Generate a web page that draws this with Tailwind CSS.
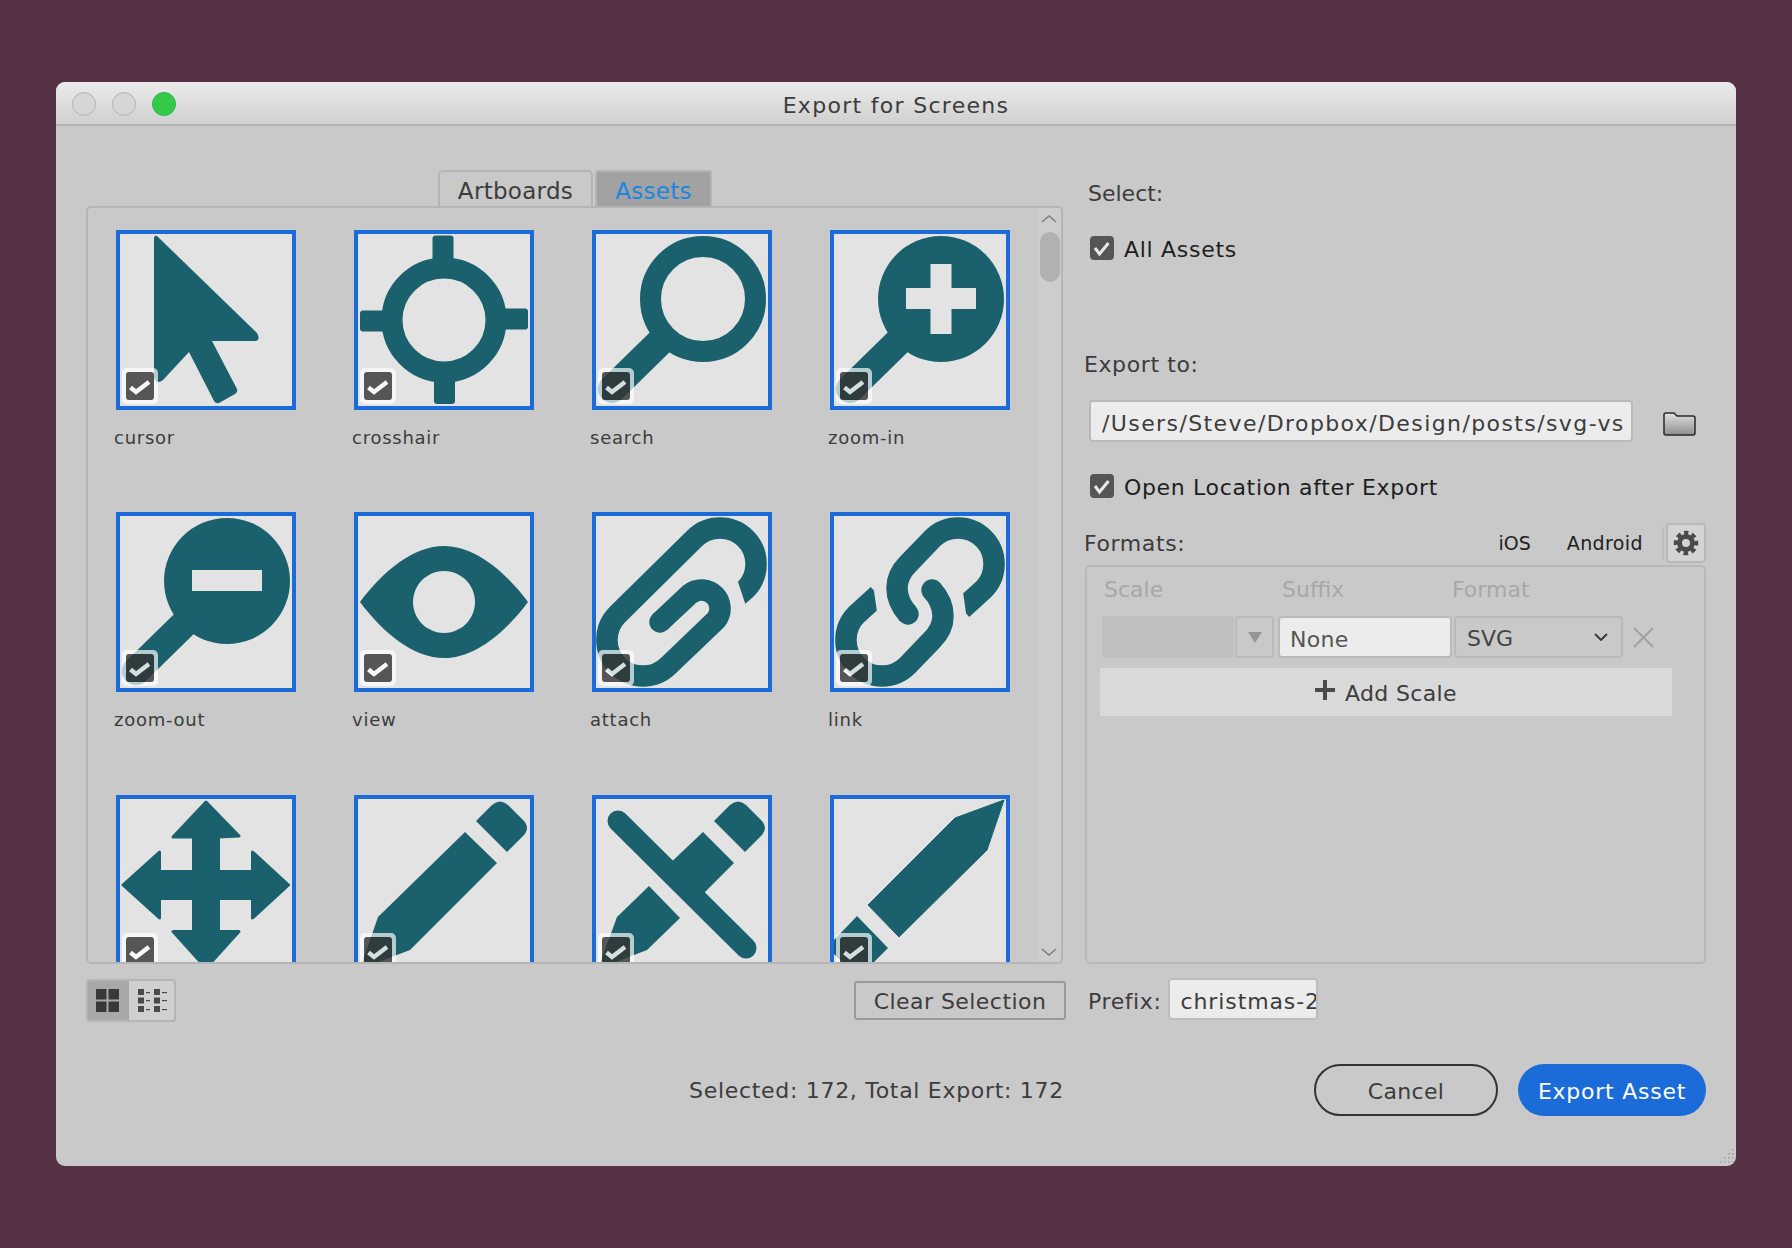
<!DOCTYPE html>
<html lang="en">
<head>
  <meta charset="UTF-8">
  <title>Export for Screens</title>
  <script src="https://cdn.jsdelivr.net/npm/@tailwindcss/browser@4"></script>
</head>
<body class="bg-[#573145] font-['DejaVu_Sans',sans-serif] text-[#3c3c3c]">
  <svg class="absolute size-0">
    <symbol id="badge" viewBox="0 0 36 36">
      <rect width="36" height="36" rx="5" fill="#fff" fill-opacity=".85"/>
      <rect x="4" y="4" width="28" height="28" rx="3" fill="#333"/>
      <path d="M8.500 19.500l5.500 4.500 13-10" fill="none" stroke="#fff" stroke-width="4.500"/>
    </symbol>
    <symbol id="tick" viewBox="0 0 24 24">
      <rect width="24" height="24" rx="4" fill="#555"/>
      <path d="M5 12l4.500 6 9-11" fill="none" stroke="#e8e8e8" stroke-width="3"/>
    </symbol>
    <linearGradient id="folder" x1="0" y1="0" x2="0" y2="1">
      <stop offset="0" stop-color="#e0e0e0"/>
      <stop offset="1" stop-color="#8e8e8e"/>
    </linearGradient>
  </svg>

  <div class="flex h-[1248px] w-[1792px] items-start pl-[56px] pt-[82px]">
    <div class="relative h-[1084px] w-[1680px] overflow-hidden rounded-[9px] bg-[#c9c9c9]">

      <!-- title bar -->
      <div class="relative flex h-[44px] items-center justify-center border-b-2 border-[#b2b2b2] bg-gradient-to-b from-[#ebebeb] to-[#d0d0d0] pt-[4px] text-[22px] tracking-[1.3px]">
        <div class="absolute left-[16px] top-[10px] flex gap-[16px]">
          <span class="size-[24px] rounded-full border border-[#b4b4b4] bg-[#d6d6d6]"></span>
          <span class="size-[24px] rounded-full border border-[#b4b4b4] bg-[#d6d6d6]"></span>
          <span class="size-[24px] rounded-full border border-[#2cb544] bg-[#33c94b]"></span>
        </div>
        Export for Screens
      </div>

      <div class="flex pl-[30px] pt-[44px]">
        <!-- left column -->
        <div class="w-[980px]">
          <div class="ml-[352px] flex h-[36px] gap-[2px] pt-0 text-[23px] tracking-[.3px]">
            <div class="flex w-[155px] items-center justify-center rounded-t-[5px] border-2 border-b-0 border-[#b5b5b5] pt-[4px]">Artboards</div>
            <div class="flex w-[117px] items-center justify-center rounded-t-[3px] border-2 border-b-0 border-[#b5b5b5] bg-[#a2a2a2] pt-[4px] text-[#1c86e2]">Assets</div>
          </div>

          <div class="flex h-[758px] w-[977px] overflow-hidden rounded-[5px] border-2 border-[#b5b5b5]">
            <div class="h-[756px] flex-1 overflow-hidden pl-[28px] pt-[22px]">
              <div class="grid w-[900px] grid-cols-[repeat(4,180px)] gap-x-[58px] text-[18px] tracking-[.75px]">

                <div class="h-[282px]">
                  <div class="relative size-[180px] border-4 border-[#1b6cd9] bg-[#e3e3e3]">
                    <svg class="size-[172px]" viewBox="4 4 172 172" fill="#1a616d"><path d="M38 9Q38 5 41 6L141 103Q145 110 139 111L96 111 121 159Q122 162 119 164L103 173Q100 174 98 171L73 122 47 150Q41 155 38 148Z"/></svg>
                    <svg class="absolute left-[2px] top-[134px] size-[36px] opacity-80"><use href="#badge"/></svg>
                  </div>
                  <div class="-ml-[2px] mt-[14px] leading-[28px]">cursor</div>
                </div>

                <div>
                  <div class="relative size-[180px] border-4 border-[#1b6cd9] bg-[#e3e3e3]">
                    <svg class="size-[172px]" viewBox="4 4 172 172" fill="#1a616d">
                      <circle cx="90" cy="90" r="52" fill="none" stroke="#1a616d" stroke-width="21"/>
                      <rect x="78.500" y="5.500" width="21" height="32" rx="3"/>
                      <rect x="80" y="142" width="21" height="32" rx="3"/>
                      <rect x="6" y="80.500" width="32" height="21" rx="3"/>
                      <rect x="142" y="78.500" width="32" height="21" rx="3"/>
                    </svg>
                    <svg class="absolute left-[2px] top-[134px] size-[36px] opacity-80"><use href="#badge"/></svg>
                  </div>
                  <div class="-ml-[2px] mt-[14px] leading-[28px]">crosshair</div>
                </div>

                <div>
                  <div class="relative size-[180px] border-4 border-[#1b6cd9] bg-[#e3e3e3]">
                    <svg class="size-[172px]" viewBox="4 4 172 172">
                      <circle cx="111" cy="69" r="52.500" fill="none" stroke="#1a616d" stroke-width="21"/>
                      <path d="M67 113L20 159" stroke="#1a616d" stroke-width="28" stroke-linecap="round"/>
                    </svg>
                    <svg class="absolute left-[2px] top-[134px] size-[36px] opacity-80"><use href="#badge"/></svg>
                  </div>
                  <div class="-ml-[2px] mt-[14px] leading-[28px]">search</div>
                </div>

                <div>
                  <div class="relative size-[180px] border-4 border-[#1b6cd9] bg-[#e3e3e3]">
                    <svg class="size-[172px]" viewBox="4 4 172 172">
                      <circle cx="111" cy="69" r="63" fill="#1a616d"/>
                      <path d="M67 113L20 159" stroke="#1a616d" stroke-width="28" stroke-linecap="round"/>
                      <path d="M76 58h24.500v-24h21v24h24.500v21h-24.500v25h-21v-25h-24.500z" fill="#e3e3e3"/>
                    </svg>
                    <svg class="absolute left-[2px] top-[134px] size-[36px] opacity-80"><use href="#badge"/></svg>
                  </div>
                  <div class="-ml-[2px] mt-[14px] leading-[28px]">zoom-in</div>
                </div>

                <div class="h-[283px]">
                  <div class="relative size-[180px] border-4 border-[#1b6cd9] bg-[#e3e3e3]">
                    <svg class="size-[172px]" viewBox="4 4 172 172">
                      <circle cx="111" cy="69" r="63" fill="#1a616d"/>
                      <path d="M67 113L20 159" stroke="#1a616d" stroke-width="28" stroke-linecap="round"/>
                      <rect x="76" y="58" width="70" height="21" fill="#e3e3e3"/>
                    </svg>
                    <svg class="absolute left-[2px] top-[134px] size-[36px] opacity-80"><use href="#badge"/></svg>
                  </div>
                  <div class="-ml-[2px] mt-[14px] leading-[28px]">zoom-out</div>
                </div>

                <div>
                  <div class="relative size-[180px] border-4 border-[#1b6cd9] bg-[#e3e3e3]">
                    <svg class="size-[172px]" viewBox="4 4 172 172"><path fill="#1a616d" fill-rule="evenodd" d="M6 90C30 58 60 34 90 34S150 58 174 90C150 122 120 146 90 146S30 122 6 90ZM90 59a31 31 0 1 0 .01 0Z"/></svg>
                    <svg class="absolute left-[2px] top-[134px] size-[36px] opacity-80"><use href="#badge"/></svg>
                  </div>
                  <div class="-ml-[2px] mt-[14px] leading-[28px]">view</div>
                </div>

                <div>
                  <div class="relative size-[180px] border-4 border-[#1b6cd9] bg-[#e3e3e3]">
                    <svg class="size-[172px]" viewBox="4 4 172 172" fill="none" stroke="#1a616d" stroke-width="21.500">
                      <path d="M146 84L153.500 77.500A36 36 0 0 0 102.500 26.500L25.500 102.500A36 36 0 0 0 76.500 153.500L124 108A18.500 18.500 0 0 0 98 82L68 110"/>
                      <circle cx="68" cy="110" r="10.700" fill="#1a616d" stroke="none"/>
                      <path d="M146 70L153 91 154 94 137 75Z" fill="#e3e3e3" stroke="none"/>
                    </svg>
                    <svg class="absolute left-[2px] top-[134px] size-[36px] opacity-80"><use href="#badge"/></svg>
                  </div>
                  <div class="-ml-[2px] mt-[14px] leading-[28px]">attach</div>
                </div>

                <div>
                  <div class="relative size-[180px] border-4 border-[#1b6cd9] bg-[#e3e3e3]">
                    <svg class="size-[172px]" viewBox="4 4 172 172" fill="none" stroke="#1a616d" stroke-width="21.500">
                      <g id="half">
                        <path d="M132 97L153.500 77.500A36 36 0 0 0 102.500 26.500L78 52Q67 63 67 76 67 90 78 102"/>
                        <circle cx="78" cy="102" r="10.700" fill="#1a616d" stroke="none"/>
                        <path d="M133 80L137 108 140 106.500 123.500 89.500Z" fill="#e3e3e3" stroke="none"/>
                      </g>
                      <use href="#half" transform="rotate(180 90 90)"/>
                    </svg>
                    <svg class="absolute left-[2px] top-[134px] size-[36px] opacity-80"><use href="#badge"/></svg>
                  </div>
                  <div class="-ml-[2px] mt-[14px] leading-[28px]">link</div>
                </div>

                <div>
                  <div class="relative size-[180px] border-4 border-[#1b6cd9] bg-[#e3e3e3]">
                    <svg class="size-[172px]" viewBox="4 4 172 172"><path fill="#1a616d" stroke="#1a616d" stroke-width="3" stroke-linejoin="round" d="M90 7L123 41 102.500 42V76.500H136.500V57L172.500 90 136.500 123V103.500H102.500V136.500H123L90 173 57 136.500H77.500V103.500H43.500V123L7 90 43.500 57V76.500H77.500V42H57Z"/></svg>
                    <svg class="absolute left-[2px] top-[134px] size-[36px] opacity-80"><use href="#badge"/></svg>
                  </div>
                </div>

                <div>
                  <div class="relative size-[180px] border-4 border-[#1b6cd9] bg-[#e3e3e3]">
                    <svg class="size-[172px]" viewBox="4 4 172 172" fill="#1a616d">
                      <path d="M122 26L138 10Q146 3 154 10L169 25Q177 33 169 41L153 57Z"/>
                      <path d="M111 37L143 68 56 155 6 174 24 122Z"/>
                    </svg>
                    <svg class="absolute left-[2px] top-[134px] size-[36px] opacity-80"><use href="#badge"/></svg>
                  </div>
                </div>

                <div>
                  <div class="relative size-[180px] border-4 border-[#1b6cd9] bg-[#e3e3e3]">
                    <svg class="size-[172px]" viewBox="4 4 172 172" fill="#1a616d">
                      <path d="M122 26L138 10Q146 3 154 10L169 25Q177 33 169 41L153 57Z"/>
                      <path d="M111 37L142 68 105 105 73 73Z"/>
                      <path d="M57 91L88 123 55 155 6 174 25 122Z"/>
                      <path d="M26 26L154 153" stroke="#1a616d" stroke-width="21" stroke-linecap="round"/>
                    </svg>
                    <svg class="absolute left-[2px] top-[134px] size-[36px] opacity-80"><use href="#badge"/></svg>
                  </div>
                </div>

                <div>
                  <div class="relative size-[180px] border-4 border-[#1b6cd9] bg-[#e3e3e3]">
                    <svg class="size-[172px]" viewBox="4 4 172 172" fill="#1a616d">
                      <path d="M174 5L125 23 38 110 69 142 157 55Z" stroke="#1a616d" stroke-linejoin="round"/>
                      <path d="M27 121L58 153 36 175Q28 183 20 175L5 160Q-3 152 5 144Z"/>
                    </svg>
                    <svg class="absolute left-[2px] top-[134px] size-[36px] opacity-80"><use href="#badge"/></svg>
                  </div>
                </div>

              </div>
            </div>

            <!-- scroll bar -->
            <div class="flex w-[24px] flex-col items-center justify-between bg-[#cdcdcd] pb-[2px] pt-[3px]">
              <div class="flex flex-col items-center">
                <svg class="size-[16px]" viewBox="0 0 16 16" fill="none" stroke="#7d7d7d" stroke-width="1.500"><path d="M1 11l7-6 7 6"/></svg>
                <div class="ml-[2px] mt-[5px] h-[50px] w-[20px] rounded-full bg-[#b1b1b1]"></div>
              </div>
              <svg class="size-[16px]" viewBox="0 0 16 16" fill="none" stroke="#7d7d7d" stroke-width="1.500"><path d="M1 5l7 6 7-6"/></svg>
            </div>
          </div>

          <div class="mt-[15px] flex h-[43px] items-center justify-between">
            <div class="flex h-[43px] w-[90px] overflow-hidden rounded-[4px] border-2 border-[#b5b5b5] bg-[#d0d0d0]">
              <div class="flex w-[41px] items-center justify-center bg-[#a8a8a8] pr-[2px]">
                <svg class="size-[23px]" viewBox="0 0 23 23" fill="#383838"><rect width="10.500" height="10.500"/><rect x="12.500" width="10.500" height="10.500"/><rect y="12.500" width="10.500" height="10.500"/><rect x="12.500" y="12.500" width="10.500" height="10.500"/></svg>
              </div>
              <div class="flex flex-1 items-center justify-center pl-[2px]">
                <svg class="h-[23px] w-[29px]" viewBox="0 0 29 23" fill="#4a4a4a"><rect width="6" height="6"/><rect y="8.500" width="6" height="6"/><rect y="17" width="6" height="6"/><rect x="16" width="6" height="6"/><rect x="16" y="8.500" width="6" height="6"/><rect x="16" y="17" width="6" height="6"/><rect x="8" y="3" width="4" height="1.200"/><rect x="8" y="11" width="4" height="1.200"/><rect x="8" y="20" width="4" height="1.200"/><rect x="24" y="3" width="5" height="1.200"/><rect x="24" y="11" width="5" height="1.200"/><rect x="24" y="20" width="5" height="1.200"/></svg>
              </div>
            </div>
            <div class="flex h-[39px] w-[212px] items-center justify-center rounded-[3px] border-2 border-[#999] pt-[2px] text-[22px] tracking-[.45px]">Clear Selection</div>
          </div>
        </div>

        <!-- right column -->
        <div class="ml-[19px] w-[621px] text-[22px] tracking-[.6px]">
          <div class="ml-[3px] flex h-[46px] items-center tracking-normal">Select:</div>

          <div class="ml-[5px] mt-[20px] flex h-[24px] items-center gap-[10px] text-[#1e1e1e] tracking-[.7px]">
            <svg class="size-[24px]"><use href="#tick"/></svg><span class="pt-[3px]">All Assets</span>
          </div>

          <div class="-ml-[1px] mt-[89px] flex h-[30px] items-center">Export to:</div>

          <div class="ml-[4px] mt-[21px] flex items-start">
            <div class="flex h-[42px] w-[544px] items-center overflow-hidden whitespace-nowrap rounded-[4px] border-2 border-[#b9b9b9] bg-[#ececec] pl-[11px] pt-[5px] tracking-[1.4px]">/Users/Steve/Dropbox/Design/posts/svg-vs</div>
            <svg class="ml-[30px] mt-[12px] h-[24px] w-[33px]" viewBox="0 0 33 24"><path d="M1 3Q1 1 3 1H11L14 4H30Q32 4 32 6V21Q32 23 30 23H3Q1 23 1 21Z" fill="url(#folder)" stroke="#2a2a2a" stroke-width="1.500"/></svg>
          </div>

          <div class="ml-[5px] mt-[32px] flex h-[24px] items-center gap-[10px] text-[#1e1e1e] tracking-[.66px]">
            <svg class="size-[24px]"><use href="#tick"/></svg><span class="pt-[3px]">Open Location after Export</span>
          </div>

          <div class="mt-[25px] flex h-[40px] items-center">
            <span class="-ml-[1px] mt-[1px]">Formats:</span>
            <span class="ml-auto text-[19px] tracking-normal text-[#1e1e1e]">iOS</span>
            <span class="ml-[36px] text-[19px] tracking-[.4px] text-[#1e1e1e]">Android</span>
            <span class="ml-[19px] h-[32px] w-[2px] bg-[#bdbdbd]"></span>
            <span class="ml-[2px] flex size-[40px] items-center justify-center rounded-[4px] border-2 border-[#b9b9b9] bg-[#d4d4d4]">
              <svg class="size-[26px]" viewBox="0 0 26 26" fill="none" stroke="#4a4a4a">
                <circle cx="13" cy="13" r="6.500" stroke-width="5"/>
                <circle cx="13" cy="13" r="10" stroke-width="4.500" stroke-dasharray="4.500 3.354" stroke-dashoffset="2.250" transform="rotate(-90 13 13)"/>
              </svg>
            </span>
          </div>

          <div class="mt-[2px] h-[399px] rounded-[5px] border-2 border-[#b9b9b9] pl-[15px] pt-[7px] tracking-normal">
            <div class="flex h-[30px] items-center text-[#a8a8a8]">
              <span class="ml-[2px] w-[178px]">Scale</span>
              <span class="w-[170px]">Suffix</span>
              <span>Format</span>
            </div>
            <div class="mt-[12px] flex h-[42px] items-stretch">
              <div class="w-[132px] rounded-[3px] bg-[#bfbfbf]"></div>
              <div class="ml-[1px] flex w-[39px] items-center justify-center rounded-[3px] border-2 border-[#bbb]">
                <svg class="size-[14px]" viewBox="0 0 14 14" fill="#959595"><path d="M0 2H14L7 13Z"/></svg>
              </div>
              <div class="ml-[4px] flex w-[174px] items-center rounded-[4px] border-2 border-[#b9b9b9] bg-[#ececec] pl-[10px] pt-[5px] tracking-[.3px] text-[#555]">None</div>
              <div class="ml-[2px] flex w-[169px] items-center justify-between rounded-[4px] border-2 border-[#b9b9b9] pl-[11px] pr-[13px] text-[#444]"><span class="pt-[2px]">SVG</span>
                <svg class="h-[9px] w-[14px]" viewBox="0 0 14 9" fill="none" stroke="#333" stroke-width="1.800"><path d="M1 1l6 6 6-6"/></svg>
              </div>
              <svg class="ml-[10px] mt-[11px] size-[21px]" viewBox="0 0 21 21" fill="none" stroke="#a0a0a0" stroke-width="1.800"><path d="M1 1l19 19M20 1L1 20"/></svg>
            </div>
            <div class="-ml-[2px] mt-[10px] flex h-[48px] w-[572px] items-center justify-center gap-[10px] bg-[#d9d9d9] tracking-[.35px]">
              <svg class="-mt-[4px] size-[20px]" viewBox="0 0 20 20" fill="#4a4a4a"><path d="M8 0h4v8h8v4h-8v8H8v-8H0V8h8z"/></svg>
              <span class="pt-[3px]">Add Scale</span>
            </div>
          </div>

          <div class="ml-[3px] mt-[14px] flex h-[42px] items-center gap-[7px]">
            <span class="pt-[4px]">Prefix:</span>
            <div class="flex h-[42px] w-[150px] items-center overflow-hidden whitespace-nowrap rounded-[4px] border-2 border-[#bdbdbd] bg-[#ececec] pl-[10px] pt-[5px] tracking-[.9px]">christmas-2</div>
          </div>
        </div>
      </div>

      <!-- footer -->
      <div class="absolute bottom-[50px] left-0 right-[30px] flex h-[52px] items-center">
        <span class="ml-[633px] text-[22px] tracking-[.7px]">Selected: 172, Total Export: 172</span>
        <div class="ml-auto flex gap-[20px] text-[22px]">
          <div class="flex h-[52px] w-[184px] items-center justify-center rounded-full border-2 border-[#333] pt-[2px] tracking-[.3px]">Cancel</div>
          <div class="flex h-[52px] w-[188px] items-center justify-center rounded-full bg-[#1b6cd9] pt-[2px] tracking-[.75px] text-white">Export Asset</div>
        </div>
      </div>

      <svg class="absolute bottom-[2px] right-[2px] size-[16px]" viewBox="0 0 16 16" fill="#9f9f9f"><path d="M14 1h1.500v1.500H14zM14 5h1.500v1.500H14zM10 5h1.500v1.500H10zM14 9h1.500v1.500H14zM10 9h1.500v1.500H10zM6 9h1.500v1.500H6zM14 13h1.500v1.500H14zM10 13h1.500v1.500H10zM6 13h1.500v1.500H6zM2 13h1.500v1.500H2z"/></svg>
    </div>
  </div>
</body>
</html>
